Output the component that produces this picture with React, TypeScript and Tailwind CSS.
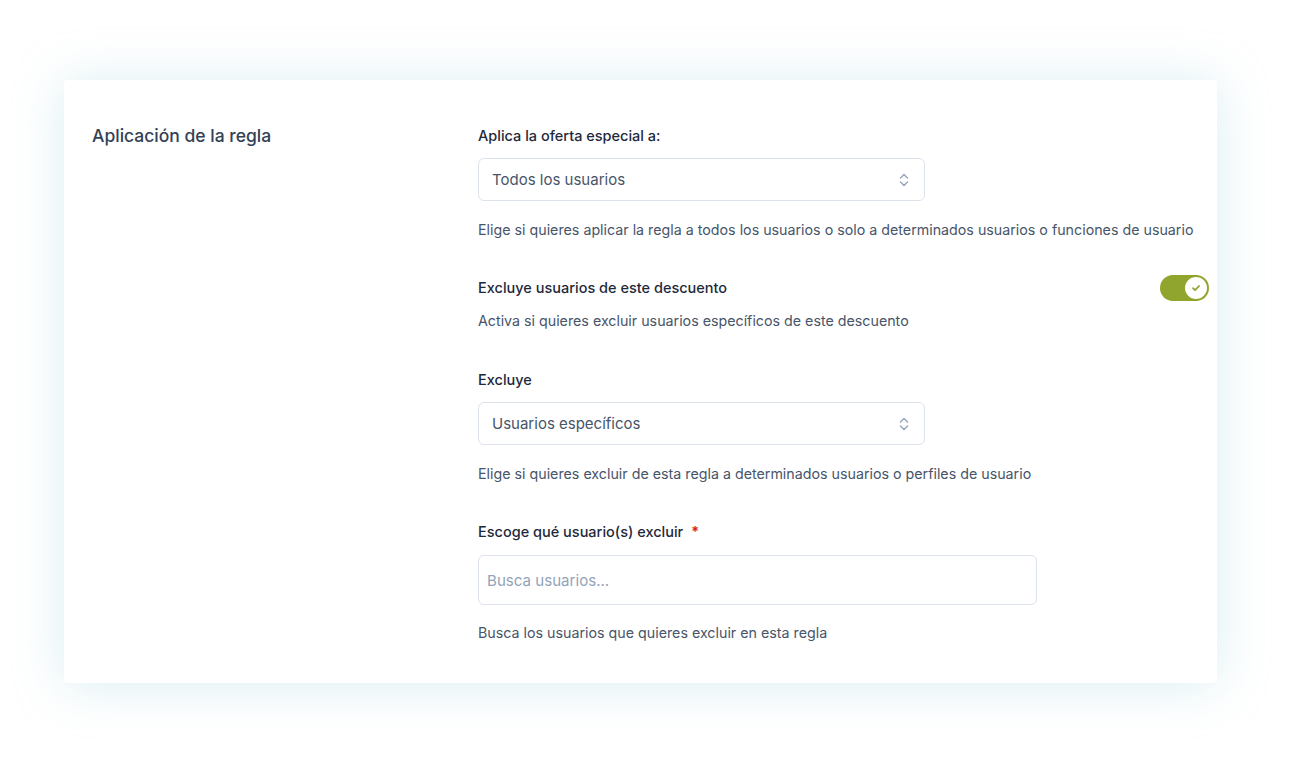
import React from 'react';

const font = { fontFamily: "Inter, 'Noto Sans', sans-serif" };

const Chevrons: React.FC = () => (
  <svg width="12" height="16" viewBox="0 0 12 16" fill="none" stroke="#94a3b8" strokeWidth={1.4} strokeLinecap="round" strokeLinejoin="round">
    <path d="M2.5 6 6 2.5 9.5 6" />
    <path d="M2.5 10 6 13.5 9.5 10" />
  </svg>
);

const Select: React.FC<{ value: string }> = ({ value }) => (
  <div className="w-[447px] h-[43px] rounded-md border border-[#dde3ea] bg-white flex items-center justify-between pl-[13px] pr-[14px]">
    <span className="text-[15px] text-[#475569] pt-[2px]">{value}</span>
    <Chevrons />
  </div>
);

const Label: React.FC<{ children: React.ReactNode }> = ({ children }) => (
  <div className="text-[14.5px] leading-5 font-medium text-[#1e293b]">{children}</div>
);

const Help: React.FC<{ children: React.ReactNode }> = ({ children }) => (
  <div className="text-[14.25px] leading-5 text-[#475569]">{children}</div>
);

const Toggle: React.FC = () => (
  <div className="w-[49px] h-[26px] rounded-full bg-[#8fa52d] flex items-center justify-end pr-[2px]">
    <div className="w-[22px] h-[22px] rounded-full bg-white flex items-center justify-center">
      <svg width="10" height="10" viewBox="0 0 10 10" fill="none" stroke="#8fa52d" strokeWidth={1.8} strokeLinecap="round" strokeLinejoin="round">
        <path d="M2 5.2 4.1 7.2 8 3" />
      </svg>
    </div>
  </div>
);

export default function App() {
  return (
    <div className="min-h-screen bg-white pt-[80px] pl-[64px]" style={font}>
      <div className="w-[1153px] bg-white rounded-sm shadow-[0_2px_50px_rgba(150,205,220,0.35)] flex pt-[44px] pb-[40px] pl-[28px] pr-[8px]">
        <div className="w-[386px] shrink-0">
          <h2 className="text-[17.5px] leading-6 font-medium text-[#334155]">Aplicación de la regla</h2>
        </div>
        <div className="flex-1 flex flex-col pt-[2px]">
          <Label>Aplica la oferta especial a:</Label>
          <div className="mt-[12px]">
            <Select value="Todos los usuarios" />
          </div>
          <div className="mt-[19px]">
            <Help>Elige si quieres aplicar la regla a todos los usuarios o solo a determinados usuarios o funciones de usuario</Help>
          </div>

          <div className="mt-[35px] flex items-center justify-between h-[26px]">
            <Label>Excluye usuarios de este descuento</Label>
            <Toggle />
          </div>
          <div className="mt-[10px]">
            <Help>Activa si quieres excluir usuarios específicos de este descuento</Help>
          </div>

          <div className="mt-[39px]">
            <Label>Excluye</Label>
          </div>
          <div className="mt-[12px]">
            <Select value="Usuarios específicos" />
          </div>
          <div className="mt-[19px]">
            <Help>Elige si quieres excluir de esta regla a determinados usuarios o perfiles de usuario</Help>
          </div>

          <div className="mt-[38px] flex items-center gap-[8px]">
            <Label>Escoge qué usuario(s) excluir</Label>
            <span className="text-[#e11d2a] text-[14px] font-bold leading-5">*</span>
          </div>
          <div className="mt-[13px]">
            <input
              placeholder="Busca usuarios..."
              className="w-[559px] h-[50px] rounded-md border border-[#dde3ea] px-[8px] text-[15.1px] text-[#475569] placeholder:text-[#94a3b8] outline-none"
            />
          </div>
          <div className="mt-[18px]">
            <Help>Busca los usuarios que quieres excluir en esta regla</Help>
          </div>
        </div>
      </div>
    </div>
  );
}
